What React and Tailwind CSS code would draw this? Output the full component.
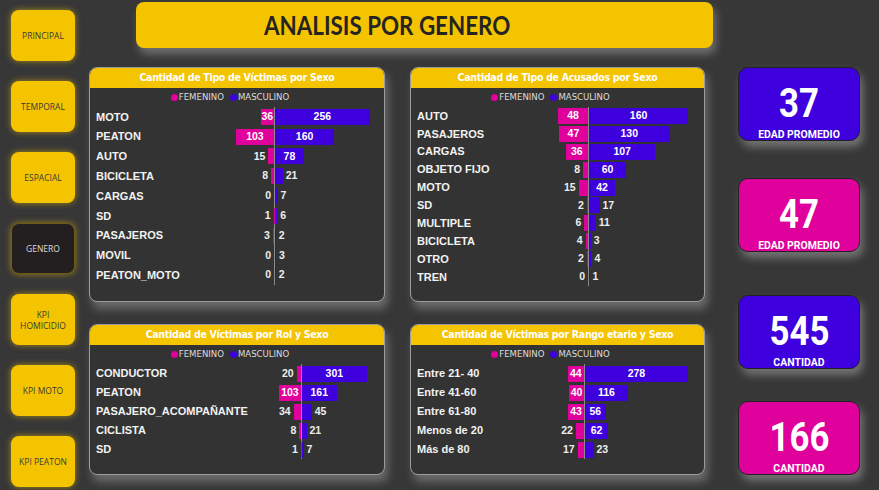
import React from 'react'

const PINK = '#e0009b'
const BLUE = '#3e00dc'

// datos de cada grafico
const charts = [
  {
    title: 'Cantidad de Tipo de Víctimas por Sexo',
    scale: 0.37,
    rowCls: 'h-[19.8px]',
    labelCls: 'w-[109px]',
    leftCls: 'w-[70px]',
    rows: [
      ['MOTO', 36, 256], ['PEATON', 103, 160], ['AUTO', 15, 78], ['BICICLETA', 8, 21],
      ['CARGAS', 0, 7], ['SD', 1, 6], ['PASAJEROS', 3, 2], ['MOVIL', 0, 3], ['PEATON_MOTO', 0, 2],
    ],
  },
  {
    title: 'Cantidad de Tipo de Acusados por Sexo',
    scale: 0.62,
    rowCls: 'h-[17.9px]',
    labelCls: 'w-[102px]',
    leftCls: 'w-[70px]',
    rows: [
      ['AUTO', 48, 160], ['PASAJEROS', 47, 130], ['CARGAS', 36, 107], ['OBJETO FIJO', 8, 60],
      ['MOTO', 15, 42], ['SD', 2, 17], ['MULTIPLE', 6, 11], ['BICICLETA', 4, 3], ['OTRO', 2, 4], ['TREN', 0, 1],
    ],
  },
  {
    title: 'Cantidad de Víctimas por Rol y Sexo',
    scale: 0.215,
    rowCls: 'h-[19px]',
    labelCls: 'w-[156px]',
    leftCls: 'w-[50px]',
    rows: [
      ['CONDUCTOR', 20, 301], ['PEATON', 103, 161], ['PASAJERO_ACOMPAÑANTE', 34, 45],
      ['CICLISTA', 8, 21], ['SD', 1, 7],
    ],
  },
  {
    title: 'Cantidad de Víctimas por Rango etario y Sexo',
    scale: 0.37,
    rowCls: 'h-[19px]',
    labelCls: 'w-[108px]',
    leftCls: 'w-[60px]',
    rows: [
      ['Entre 21- 40', 44, 278], ['Entre 41-60', 40, 116], ['Entre 61-80', 43, 56],
      ['Menos de 20', 22, 62], ['Más de 80', 17, 23],
    ],
  },
]

const menu = ['PRINCIPAL', 'TEMPORAL', 'ESPACIAL', 'GENERO', 'KPI HOMICIDIO', 'KPI MOTO', 'KPI PEATON']

const numFont = { fontFamily: '"Liberation Sans", Arial, sans-serif' }
const condFont = { fontFamily: '"DejaVu Sans Condensed", Roboto, sans-serif' }

const Row = ({ row, cfg }) => {
  const [label, f, m] = row
  const fw = f * cfg.scale
  const mw = m * cfg.scale
  return (
    <div className={`flex items-center ${cfg.rowCls}`}>
      <div className={`${cfg.labelCls} whitespace-nowrap text-[11px] font-bold text-[#f2f2f2]`}>{label}</div>
      <div className={`${cfg.leftCls} flex h-full items-center justify-end border-r border-[#8a8a8a]`}>
        {fw < 12 && <span className="mr-[3px] text-[10.5px] font-bold text-[#eeeeee]">{f}</span>}
        <div
          className="flex h-[16px] items-center justify-center text-[10.5px] font-bold text-white"
          style={{ width: fw, background: PINK }}
        >
          {fw >= 12 && <span className="whitespace-nowrap">{f}</span>}
        </div>
      </div>
      <div className="flex h-full items-center">
        <div
          className="flex h-[16px] items-center justify-center text-[10.5px] font-bold text-white"
          style={{ width: mw, background: BLUE }}
        >
          {mw >= 12 && <span className="whitespace-nowrap">{m}</span>}
        </div>
        {mw < 12 && <span className="ml-[3px] text-[10.5px] font-bold text-[#eeeeee]">{m}</span>}
      </div>
    </div>
  )
}

const Panel = ({ cfg }) => {
  return (
    <div className="flex flex-col overflow-hidden rounded-[8px] border border-[#9c9c9c] bg-[#333333] shadow-[3px_7px_8px_rgba(150,150,150,0.55)]" style={numFont}>
      <div
        className="flex h-[20px] items-center justify-center bg-[#f5c400] text-[10.5px] font-bold tracking-[-0.3px] text-white"
        style={condFont}
      >
        {cfg.title}
      </div>
      <div className="flex h-[19px] items-center justify-center gap-[6px] pr-[14px] text-[9.5px] text-[#dddddd]" style={condFont}>
        <div className="flex items-center gap-[1px]">
          <span className="h-[7px] w-[7px] rounded-full bg-[#e0009b]"></span>FEMENINO
        </div>
        <div className="flex items-center gap-[1px]">
          <span className="h-[7px] w-[7px] rounded-full bg-[#3e00dc]"></span>MASCULINO
        </div>
      </div>
      <div className="flex flex-col pl-[6px]">
        {cfg.rows.map((r) => (
          <Row key={r[0]} row={r} cfg={cfg} />
        ))}
      </div>
    </div>
  )
}

const Kpi = ({ value, label, color, cls }) => {
  return (
    <div
      className={`${cls} flex h-[74px] w-[122px] flex-col items-center rounded-[10px] border border-[#222] pt-[16px] text-white shadow-[3px_6px_8px_rgba(190,190,190,0.45)]`}
      style={{ background: color, fontFamily: 'Roboto, sans-serif' }}
    >
      <div className="scale-x-[0.87] text-[40px] font-bold leading-none">{value}</div>
      <div className="mt-[5px] scale-x-[0.95] text-[11px] font-bold leading-none">{label}</div>
    </div>
  )
}

export default function App() {
  return (
    <div className="flex h-[490px] w-[879px] overflow-hidden bg-[#373737]">
      <div className="flex w-[89px] flex-col gap-[20px] pl-[11px] pt-[10px]" style={{ fontFamily: '"Open Sans", sans-serif' }}>
        {menu.map((m) => (
          <div
            key={m}
            className={
              m === 'GENERO'
                ? 'flex h-[51px] w-[64px] items-center justify-center rounded-[8px] border border-[#6b5a12] bg-[#231f20] px-[4px] text-center text-[8.5px] leading-[11px] text-[#dddddd] shadow-[0_0_6px_rgba(245,196,0,0.55)]'
                : 'flex h-[51px] w-[64px] items-center justify-center rounded-[8px] bg-[#f5c400] px-[4px] text-center text-[8.5px] leading-[11px] text-[#3a3a3a] shadow-[0_0_6px_rgba(245,196,0,0.6)]'
            }
          >
            {m}
          </div>
        ))}
      </div>

      <div className="flex w-[624px] flex-col">
        <div
          className="ml-[47px] mt-[2px] flex h-[46px] w-[577px] items-center justify-center rounded-[8px] bg-[#f5c400] pr-[74px] text-[26px] font-bold text-[#252423] shadow-[3px_6px_8px_rgba(150,150,150,0.6)]"
          style={{ fontFamily: 'Lato, "Open Sans", sans-serif' }}
        >
          <span className="inline-block scale-x-[0.86]">ANALISIS POR GENERO</span>
        </div>
        <div className="mt-[19px] grid w-[616px] grid-cols-[296px_295px] grid-rows-[235px_151px] gap-x-[25px] gap-y-[22px]">
          {charts.map((c) => (
            <Panel key={c.title} cfg={c} />
          ))}
        </div>
      </div>

      <div className="ml-[25px] flex flex-col pt-[67px]">
        <Kpi value="37" label="EDAD PROMEDIO" color={BLUE} cls="" />
        <Kpi value="47" label="EDAD PROMEDIO" color="#e0009b" cls="mt-[37px]" />
        <Kpi value="545" label="CANTIDAD" color={BLUE} cls="mt-[43px]" />
        <Kpi value="166" label="CANTIDAD" color="#e0009b" cls="mt-[32px]" />
      </div>
    </div>
  )
}
